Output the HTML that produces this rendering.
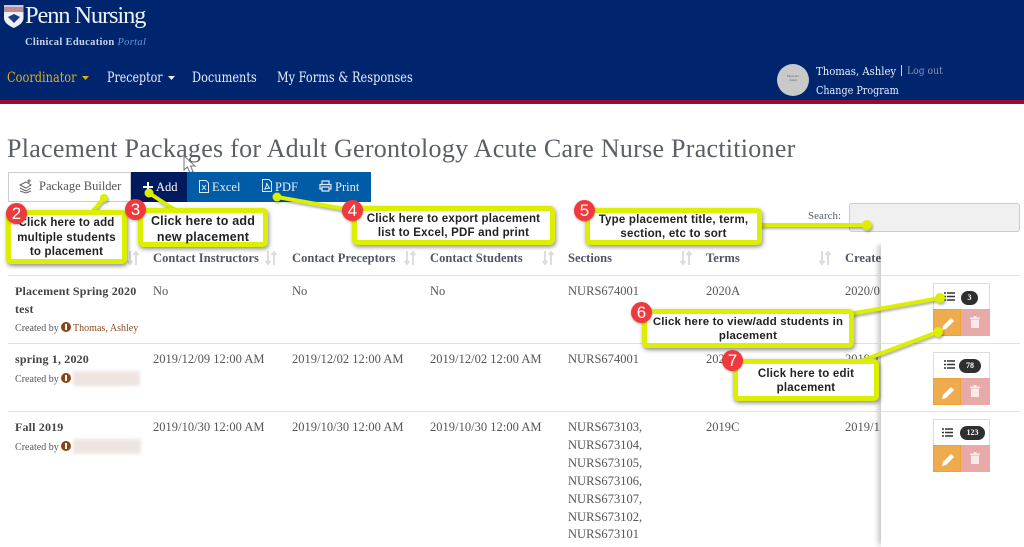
<!DOCTYPE html>
<html><head><meta charset="utf-8"><style>
html,body{margin:0;padding:0}
body{width:1024px;height:547px;overflow:hidden;position:relative;background:#fff;font-family:"Liberation Serif",serif;color:#555}
.t,.a{position:absolute;white-space:nowrap}
.t{line-height:18px;font-size:12.5px;letter-spacing:.02px}
.h{font-weight:bold;color:#4f5668;font-size:12.5px;letter-spacing:.04px}
.b{font-weight:bold;color:#444;letter-spacing:.16px}
.nav{font-family:"DejaVu Serif",serif;color:#e8eefc;font-size:13.5px;transform-origin:0 50%;line-height:18px;transform:scaleX(.84);letter-spacing:0}
.c{position:absolute;box-sizing:border-box;border:5px solid #dcef00;border-radius:5px;background:#fff;box-shadow:1px 2px 4px rgba(0,0,0,.45);font:bold 12px/15px "Liberation Sans",sans-serif;color:#222;text-align:center;letter-spacing:.2px}
.n{position:absolute;width:21px;height:21px;border-radius:50%;background:#f0393c;color:#fff;font:17px/21px "Liberation Sans",sans-serif;text-align:center;box-shadow:0 1px 2px rgba(0,0,0,.3)}
.rl{position:absolute;left:8px;right:4px;height:1px;background:#e2e2e2}
.blur{position:absolute;background:#efe5e0;filter:blur(1.5px)}
.act{position:absolute;left:933px;width:57px;height:53px;box-sizing:border-box}
.top{position:absolute;left:0;top:0;width:57px;height:26px;box-sizing:border-box;border:1px solid #ddd;border-bottom:0;background:#fff}
.o{position:absolute;left:0;top:26px;width:28px;height:27px;background:#efac4e;box-sizing:border-box;border:1px solid #eea236}
.p{position:absolute;left:28px;top:26px;width:29px;height:27px;background:#e8a9a9}
.pill{position:absolute;top:6px;height:14px;border-radius:8px;background:#2f2f2f;color:#fff;font:bold 8px/14px "Liberation Serif",serif;text-align:center}
.btn{color:#e6eefa;font-size:12.5px;line-height:16px;letter-spacing:0}
svg{position:absolute;overflow:visible}
.s{width:12px;height:14px;top:251px}
.s path{fill:none;stroke:#ddd;stroke-width:2}
</style></head><body>

<div class="a" style="left:0;top:0;width:1024px;height:100px;background:#00256f"></div>
<div class="a" style="left:0;top:100px;width:1024px;height:4px;background:#990a2c"></div>

<svg style="left:4px;top:5px" width="20" height="23" viewBox="0 0 20 23"><path d="M0 0H19.500V13C19.500 18 14 21 9.700 23C5.500 21 0 18 0 13Z" fill="#eef0f6"/><rect x="0" y="0" width="19.500" height="2" fill="#d8c4cc"/><rect x="0" y="2" width="19.500" height="5" fill="#b98d9c"/><path d="M4 12l6-3 6 3-6 6z" fill="#1f3b80"/></svg>
<div class="t" style="left:25px;top:1px;font-size:24.500px;line-height:30px;color:#eef1f8;letter-spacing:-1.15px">Penn Nursing</div>
<div class="t" style="left:25px;top:34px;font-size:10.500px;font-weight:bold;color:#c9d3e8;letter-spacing:.32px">Clinical Education <i style="font-weight:normal;color:#5d9bd8">Portal</i></div>

<div class="t nav" style="left:7px;top:69px;color:#e4ad12">Coordinator</div>
<svg style="left:82px;top:76px" width="7" height="4"><path d="M0 0H7L3.500 4Z" fill="#e4ad12"/></svg>
<div class="t nav" style="left:107px;top:69px;transform:scaleX(.82)">Preceptor</div>
<svg style="left:168px;top:76px" width="7" height="4"><path d="M0 0H7L3.500 4Z" fill="#e8eefc"/></svg>
<div class="t nav" style="left:192px;top:69px">Documents</div>
<div class="t nav" style="left:277px;top:69px">My Forms &amp; Responses</div>

<div class="a" style="left:777px;top:64px;width:32px;height:32px;border-radius:50%;background:#c9c9c9;border:0"></div>
<div class="t" style="left:785px;top:74px;width:16px;font-size:3px;line-height:4px;text-align:center;color:#555;white-space:normal;letter-spacing:0">Photo not found</div>
<div class="t nav" style="left:816px;top:62px;font-size:11.500px;transform:scaleX(.875)">Thomas, Ashley</div>
<div class="a" style="left:901px;top:65px;width:1px;height:11px;background:#ccd"></div>
<div class="t nav" style="left:907px;top:62px;font-size:10.500px;color:#8c93a8;transform:scaleX(.88)">Log out</div>
<div class="t nav" style="left:816px;top:81px;font-size:11.500px;transform:scaleX(.835)">Change Program</div>

<div class="t" style="left:7px;top:133px;font-size:26px;line-height:32px;color:#5a5f66;letter-spacing:.27px">Placement Packages for Adult Gerontology Acute Care Nurse Practitioner</div>

<svg style="left:183px;top:155px" width="14" height="19" viewBox="0 0 14 19"><path d="M1 1V15L4.500 12L7 18L10 16.500L7.500 11H12Z" fill="#fff" stroke="#777" stroke-width="1"/></svg>

<div class="a" style="left:8px;top:172px;width:123px;height:30px;box-sizing:border-box;border:1px solid #ccc;background:#fff"></div>
<svg style="left:19px;top:179px" width="13" height="15" viewBox="0 0 13 15" fill="none" stroke="#666" stroke-width="1"><path d="M1 6l6-3 5 3-5 3zM1 9l6 3 5-3M1 12l6 2 5-2M10 0v4M8 2h4"/></svg>
<div class="t" style="left:39px;top:177px;color:#555;letter-spacing:0">Package Builder</div>
<div class="a" style="left:131px;top:172px;width:56px;height:30px;background:#001a5e"></div>
<div class="a" style="left:187px;top:172px;width:184px;height:30px;background:#005ca6"></div>
<svg style="left:143px;top:182px" width="10" height="10"><path d="M5 0V10M0 5H10" stroke="#fff" stroke-width="2"/></svg>
<div class="t btn" style="left:156px;top:179px;color:#fff">Add</div>
<svg style="left:199px;top:180px" width="10" height="13" viewBox="0 0 10 13" fill="none" stroke="#dfe9f7"><path d="M.5.500H7L9.500 3V12.500H.5Z"/><path d="M3 5l4 5M7 5l-4 5"/></svg>
<div class="t btn" style="left:212px;top:179px">Excel</div>
<svg style="left:262px;top:179px" width="10" height="13" viewBox="0 0 10 13" fill="none" stroke="#dfe9f7"><path d="M.5.500H7L9.500 3V12.500H.5Z"/><path d="M2.500 10.500C4 8 5 6 4.500 4C6 7 7 9 8 9.500C6 9 4 9.500 2.500 10.500Z"/></svg>
<div class="t btn" style="left:275px;top:179px">PDF</div>
<svg style="left:319px;top:180px" width="13" height="12" viewBox="0 0 13 12" fill="none" stroke="#dfe9f7" stroke-width="1.200"><path d="M3 4V1H10V4M3 9H1V4.500H12V9H10M3 7H10V11H3Z"/></svg>
<div class="t btn" style="left:335px;top:179px">Print</div>

<div class="t" style="left:808px;top:207px;color:#5a6070;font-size:11px">Search:</div>
<div class="a" style="left:849px;top:203px;width:171px;height:29px;box-sizing:border-box;border:1px solid #ccc;border-radius:3px;background:#f0f0f0"></div>

<div class="rl" style="top:275px;right:146px"></div>
<div class="rl" style="top:343px;right:146px"></div>
<div class="rl" style="top:411px;right:146px"></div>

<div class="t h" style="left:153px;top:249px">Contact Instructors</div>
<svg class="s" style="left:265px"><path d="M3 0V13M.5 10L3 13L5.500 10M9 14V1M6.500 4L9 1L11.500 4"/></svg>
<div class="t h" style="left:292px;top:249px">Contact Preceptors</div>
<svg class="s" style="left:404px"><path d="M3 0V13M.5 10L3 13L5.500 10M9 14V1M6.500 4L9 1L11.500 4"/></svg>
<div class="t h" style="left:430px;top:249px">Contact Students</div>
<svg class="s" style="left:542px"><path d="M3 0V13M.5 10L3 13L5.500 10M9 14V1M6.500 4L9 1L11.500 4"/></svg>
<div class="t h" style="left:568px;top:249px">Sections</div>
<svg class="s" style="left:680px"><path d="M3 0V13M.5 10L3 13L5.500 10M9 14V1M6.500 4L9 1L11.500 4"/></svg>
<div class="t h" style="left:706px;top:249px">Terms</div>
<svg class="s" style="left:819px"><path d="M3 0V13M.5 10L3 13L5.500 10M9 14V1M6.500 4L9 1L11.500 4"/></svg>
<div class="t h" style="left:845px;top:249px">Create</div>
<svg class="s" style="left:127px"><path d="M3 0V13M.5 10L3 13L5.500 10M9 14V1M6.500 4L9 1L11.500 4"/></svg>

<div class="t b" style="left:15px;top:282px;font-size:12px">Placement Spring 2020</div>
<div class="t b" style="left:15px;top:300px;font-size:12px">test</div>
<div class="t" style="left:15px;top:320px;font-size:10px">Created by</div>
<svg style="left:61px;top:322px" width="10" height="10"><circle cx="5" cy="5" r="5" fill="#8a4514"/><rect x="4" y="2" width="2" height="6" fill="#fff"/></svg>
<div class="t" style="left:73px;top:320px;font-size:10px;color:#8a4c22">Thomas, Ashley</div>
<div class="t" style="left:153px;top:282px">No</div><div class="t" style="left:292px;top:282px">No</div><div class="t" style="left:430px;top:282px">No</div>
<div class="t" style="left:568px;top:282px">NURS674001</div><div class="t" style="left:706px;top:282px">2020A</div><div class="t" style="left:845px;top:282px">2020/0</div>

<div class="t b" style="left:15px;top:350px;font-size:12px">spring 1, 2020</div>
<div class="t" style="left:15px;top:371px;font-size:10px">Created by</div>
<svg style="left:61px;top:373px" width="10" height="10"><circle cx="5" cy="5" r="5" fill="#8a4514"/><rect x="4" y="2" width="2" height="6" fill="#fff"/></svg>
<div class="blur" style="left:73px;top:371px;width:67px;height:15px"></div>
<div class="t" style="left:153px;top:350px">2019/12/09 12:00 AM</div><div class="t" style="left:292px;top:350px">2019/12/02 12:00 AM</div><div class="t" style="left:430px;top:350px">2019/12/02 12:00 AM</div>
<div class="t" style="left:568px;top:350px">NURS674001</div><div class="t" style="left:706px;top:350px">2020A</div><div class="t" style="left:845px;top:350px">2019/1</div>

<div class="t b" style="left:15px;top:418px;font-size:12px">Fall 2019</div>
<div class="t" style="left:15px;top:439px;font-size:10px">Created by</div>
<svg style="left:61px;top:441px" width="10" height="10"><circle cx="5" cy="5" r="5" fill="#8a4514"/><rect x="4" y="2" width="2" height="6" fill="#fff"/></svg>
<div class="blur" style="left:73px;top:439px;width:68px;height:15px"></div>
<div class="t" style="left:153px;top:418px">2019/10/30 12:00 AM</div><div class="t" style="left:292px;top:418px">2019/10/30 12:00 AM</div><div class="t" style="left:430px;top:418px">2019/10/30 12:00 AM</div>
<div class="t" style="left:568px;top:418px">NURS673103,</div><div class="t" style="left:568px;top:436px">NURS673104,</div><div class="t" style="left:568px;top:454px">NURS673105,</div><div class="t" style="left:568px;top:472px">NURS673106,</div><div class="t" style="left:568px;top:490px">NURS673107,</div><div class="t" style="left:568px;top:508px">NURS673102,</div><div class="t" style="left:568px;top:525px">NURS673101</div>
<div class="t" style="left:706px;top:418px">2019C</div><div class="t" style="left:845px;top:418px">2019/1</div>

<div class="a" style="left:881px;top:243px;width:143px;height:304px;background:#fff;box-shadow:-5px 0 5px -2px rgba(0,0,0,.22);clip-path:inset(0 0 0 -10px)"></div>
<div class="a" style="left:881px;top:275px;width:139px;height:1px;background:#e2e2e2"></div>
<div class="a" style="left:881px;top:343px;width:139px;height:1px;background:#e2e2e2"></div>
<div class="a" style="left:881px;top:411px;width:139px;height:1px;background:#e2e2e2"></div>

<div class="act" style="top:283px"><div class="top"><svg style="left:10px;top:8px" width="11" height="9"><path d="M0 1h2M0 4.500h2M0 8h2M3 1h8M3 4.500h8M3 8h8" stroke="#333" stroke-width="1.500"/></svg><div class="pill" style="left:27px;width:17px;top:7px">3</div></div><div class="o"><svg style="left:8px;top:7px" width="13" height="13"><path d="M0 13L1 9L9 1L12 4L4 12Z" fill="#fff"/></svg></div><div class="p"><svg style="left:9px;top:7px" width="10" height="12"><path d="M0 1.500H10V3H0ZM3.500 0H6.500V1.500H3.500ZM1 3.500H9V12H1Z" fill="#fbe9e9"/></svg></div></div>
<div class="act" style="top:352px"><div class="top"><svg style="left:10px;top:7px" width="11" height="9"><path d="M0 1h2M0 4.500h2M0 8h2M3 1h8M3 4.500h8M3 8h8" stroke="#333" stroke-width="1.500"/></svg><div class="pill" style="left:25px;width:22px">78</div></div><div class="o"><svg style="left:8px;top:7px" width="13" height="13"><path d="M0 13L1 9L9 1L12 4L4 12Z" fill="#fff"/></svg></div><div class="p"><svg style="left:9px;top:7px" width="10" height="12"><path d="M0 1.500H10V3H0ZM3.500 0H6.500V1.500H3.500ZM1 3.500H9V12H1Z" fill="#fbe9e9"/></svg></div></div>
<div class="act" style="top:419px"><div class="top"><svg style="left:8px;top:8px" width="11" height="9"><path d="M0 1h2M0 4.500h2M0 8h2M3 1h8M3 4.500h8M3 8h8" stroke="#333" stroke-width="1.500"/></svg><div class="pill" style="left:26px;width:25px;top:6px">123</div></div><div class="o"><svg style="left:8px;top:7px" width="13" height="13"><path d="M0 13L1 9L9 1L12 4L4 12Z" fill="#fff"/></svg></div><div class="p"><svg style="left:9px;top:7px" width="10" height="12"><path d="M0 1.500H10V3H0ZM3.500 0H6.500V1.500H3.500ZM1 3.500H9V12H1Z" fill="#fbe9e9"/></svg></div></div>

<svg style="left:0;top:0" width="1024" height="547" fill="#dcef00" stroke="#dcef00" stroke-width="4" stroke-linecap="round">
<g style="filter:drop-shadow(1px 2px 1px rgba(0,0,0,.3))">
<path d="M104 198L92 212M149 193L175 210M277 197L356 211M760 225H866M940 298L850 314M938 332L858 362"/>
<circle cx="104" cy="198" r="4" stroke="none"/><circle cx="149" cy="193" r="4.500" stroke="none"/><circle cx="277" cy="197" r="4.500" stroke="none"/><circle cx="867" cy="225" r="5" stroke="none"/><circle cx="940" cy="298" r="5" stroke="none"/><circle cx="938" cy="332" r="5" stroke="none"/>
</g></svg>

<div class="c" style="left:6px;top:210px;width:121px;height:54px;padding-top:1px;font-size:11.500px;line-height:14.500px">Click here to add<br>multiple students<br>to placement</div>
<div class="c" style="left:138px;top:208px;width:130px;height:39px;padding-top:0;font-size:12.500px;line-height:16px">Click here to add<br>new placement</div>
<div class="c" style="left:352px;top:206px;width:203px;height:39px;padding-top:1px;font-size:11.500px;line-height:14px">Click here to export placement<br>list to Excel, PDF and print</div>
<div class="c" style="left:585px;top:208px;width:177px;height:37px;padding-top:0;font-size:11.500px;line-height:14px">Type placement title, term,<br>section, etc to sort</div>
<div class="c" style="left:642px;top:309px;width:212px;height:39px;padding-top:1px;font-size:11.400px;line-height:14px">Click here to view/add students in<br>placement</div>
<div class="c" style="left:733px;top:359px;width:146px;height:42px;padding-top:3px;font-size:11.500px;line-height:14px">Click here to edit<br>placement</div>

<div class="n" style="left:6px;top:203px">2</div>
<div class="n" style="left:125px;top:199px">3</div>
<div class="n" style="left:342px;top:200px">4</div>
<div class="n" style="left:574px;top:200px">5</div>
<div class="n" style="left:631px;top:302px">6</div>
<div class="n" style="left:722px;top:350px">7</div>

</body></html>
